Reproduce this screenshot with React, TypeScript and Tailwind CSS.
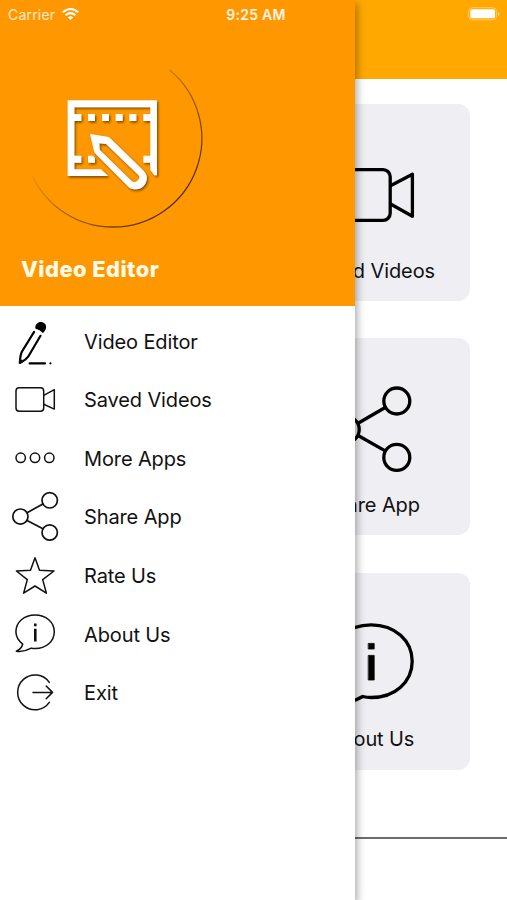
// react
import { FC, ReactNode } from "react";

interface IconProps {
  children: ReactNode;
}

// thin 50x50 icons of the side menu
const MenuIcon: FC<IconProps> = ({ children }) => (
  <svg
    className="h-[50px] w-[50px] shrink-0 overflow-visible"
    viewBox="0 0 50 50"
    fill="none"
    stroke="#111"
    strokeWidth="1.5"
    strokeLinecap="round"
    strokeLinejoin="round"
  >
    {children}
  </svg>
);

// bolder 100x100 icons of the home cards
const CardIcon: FC<IconProps> = ({ children }) => (
  <svg
    className="h-[100px] w-[100px] shrink-0"
    viewBox="0 0 100 100"
    fill="none"
    stroke="#000"
    strokeWidth="3.3"
    strokeLinecap="round"
    strokeLinejoin="round"
  >
    {children}
  </svg>
);

const menuItems = [
  {
    label: "Video Editor",
    icon: (
      <>
        <path
          d="M25.3 12.6C25 7.4 29.2 5 33 6.4C37.2 8.2 37.2 13 33 17Q29.8 13.8 25.3 12.6Z"
          fill="#000"
          stroke="none"
        />
        <path d="M24.1 15.9L12 35.5Q10.3 38.5 9.8 46.9Q16.5 43.5 18.6 40L30.5 19.8" stroke="#000" strokeWidth="2.2" />
        <path d="M9.9 47V43.5L13 45.3Z" fill="#000" />
        <path d="M19.6 47.4H35" stroke="#000" strokeWidth="2.1" />
        <circle cx="40.4" cy="47.3" r="1.1" fill="#000" stroke="none" />
      </>
    ),
  },
  {
    label: "Saved Videos",
    icon: (
      <>
        <rect x="6" y="12.7" width="27.7" height="23.6" rx="3.2" />
        <path d="M33.7 20.4L44.3 14.7V34.1L33.7 29.2" />
      </>
    ),
  },
  {
    label: "More Apps",
    icon: (
      <>
        <circle cx="10.7" cy="24.8" r="4.7" />
        <circle cx="25" cy="24.8" r="4.7" />
        <circle cx="39.3" cy="24.8" r="4.7" />
      </>
    ),
  },
  {
    label: "Share App",
    icon: (
      <g strokeWidth="1.7">
        <circle cx="10.4" cy="24.6" r="7.6" />
        <circle cx="39.7" cy="8.3" r="7.7" />
        <circle cx="39.7" cy="40.5" r="7.7" />
        <path d="M17.1 20.7L32.9 12M17.1 28.5L32.9 36.8" />
      </g>
    ),
  },
  {
    label: "Rate Us",
    icon: (
      <path d="M25 6.8L29.5 19.2L44 20L32.7 28.6L36.4 42.2L25 35L13.6 42.2L17.3 28.6L6.4 20L20.5 19.2Z" />
    ),
  },
  {
    label: "About Us",
    icon: (
      <>
        <path d="M12.7 35.2C8.8 32 5.9 27.8 5.9 22.8C5.9 13.2 14.2 6 25.1 6S44.3 13.2 44.3 22.8S36 39.6 25.1 39.6Q23 39.6 21.2 39.1C17 41.5 12 43 6.3 42.2C9 41 11.8 38.6 12.7 35.2Z" />
        <path d="M25.3 15.8V16M25.3 21V31.2" strokeWidth="2.6" strokeLinecap="square" />
      </>
    ),
  },
  {
    label: "Exit",
    icon: (
      <>
        <path d="M39.3 14.4A17.4 17.4 0 1 0 39.3 34.4" />
        <path d="M23 24.4H42.3M36.2 18L42.5 24.4L36.2 30.8" />
      </>
    ),
  },
];

const cards = [
  {
    label: "Saved Videos",
    icon: (
      <>
        <rect x="10" y="23.7" width="59.2" height="50.6" rx="7" />
        <path d="M70 39.5L91.4 28.3V70.3L70 58.3" />
      </>
    ),
  },
  {
    label: "Share App",
    icon: (
      <>
        <circle cx="25" cy="49.4" r="13.2" />
        <circle cx="75.8" cy="21" r="13" />
        <circle cx="75.8" cy="77.4" r="13" />
        <path d="M37.5 43L64.2 27.5M37.5 55.7L64.2 70.9" />
      </>
    ),
  },
  {
    label: "About Us",
    icon: (
      <>
        <path d="M23.4 73.2C15 66.5 8.7 57.2 8.7 46.3C8.7 25.6 26.5 9.8 50.2 9.8S91.2 25.6 91.2 46.3S73.9 82.5 50.2 82.5Q45.7 82.5 41.7 81.5C32.7 86.7 21.7 90 9.5 88.4C15.3 85.8 21.4 80.6 23.4 73.2Z" />
        <path d="M47.6 28.4h5.6v5.6h-5.6zM47.6 40.4h5.6v24.6h-5.6z" fill="#000" strokeWidth="0.8" />
      </>
    ),
  },
];

const Logo: FC = () => (
  <svg className="h-[180px] w-[200px]" viewBox="0 0 600 540" fill="none">
    <defs>
      <linearGradient id="arc" gradientUnits="userSpaceOnUse" x1="200" y1="155" x2="467" y2="423">
        <stop offset="0" stopColor="#4a2c00" stopOpacity="0" />
        <stop offset="0.4" stopColor="#4a2c00" stopOpacity="0.45" />
        <stop offset="1" stopColor="#3a2200" stopOpacity="0.9" />
      </linearGradient>
      <filter id="drop" x="-10%" y="-10%" width="125%" height="125%">
        <feDropShadow dx="4" dy="5" stdDeviation="3" floodColor="#5a3200" floodOpacity="0.75" />
      </filter>
    </defs>
    <path d="M449 30A266 266 0 0 1 279 501A266 266 0 0 1 36 345" stroke="url(#arc)" strokeWidth="3.8" />
    <g fill="#fff" filter="url(#drop)">
      <path d="M143 121H411V346L403 346L391 330V308H370V287H391V183H370V162H391V142H163V162H184V183H163V287H184V308H163V328H243L265 348H143Z" />
      <path d="M204 162h21v21h-21zM246 162h21v21h-21zM287 162h21v21h-21zM328 162h21v21h-21zM204 287h15l6 7v14h-21z" />
      <path
        fillRule="evenodd"
        d="M210 222L262 230Q267 231 271 235L371 332Q388 350 376 371Q362 394 334 386Q329 384 325 380L228 283Q223 278 222 273ZM238 250L239 269L335 363Q343 370 352 363Q363 353 355 345L258 252Z"
      />
    </g>
  </svg>
);

const StatusBar: FC = () => (
  <div className="absolute inset-x-0 top-0 z-20 grid h-7 grid-cols-3 items-center pr-[7px] pl-2 text-[14px] text-white">
    <div className="flex items-center gap-[7px]">
      <span className="tracking-[0.2px] text-white/80">Carrier</span>
      <svg className="h-3 w-[17px]" viewBox="0 0 17 12" fill="none" stroke="#fff" strokeWidth="2.1">
        <path d="M.8 4.2Q8.5 -2.3 16.2 4.2M3.6 7.2Q8.5 3.2 13.4 7.2" />
        <path d="M5.8 9.4Q8.5 7.2 11.2 9.4L8.5 12Z" fill="#fff" stroke="none" />
      </svg>
    </div>
    <span className="pl-1 text-center font-semibold tracking-[0.25px] whitespace-nowrap text-white/90">9:25 AM</span>
    <svg className="h-[14px] w-8 justify-self-end" viewBox="0 0 32 14">
      <rect x="0.7" y="0.7" width="28" height="12.2" rx="4" fill="none" stroke="#fff" strokeOpacity="0.4" />
      <rect x="2.3" y="2.3" width="24.8" height="9" rx="2" fill="#fff" />
      <path d="M30 5v4q1.6-.6 1.6-2t-1.6-2" fill="#fff" fillOpacity="0.5" />
    </svg>
  </div>
);

const Home: FC = () => (
  <main className="flex h-full flex-col">
    <header className="h-[79px] shrink-0 bg-[#ffa800]" />
    <div className="flex h-[758px] shrink-0 flex-col items-end gap-[37.4px] pt-[25px] pr-[37px]">
      {cards.map(card => (
        <div
          key={card.label}
          className="flex h-[197px] w-[198px] shrink-0 flex-col items-center gap-[12.6px] rounded-xl bg-[#efeef3] pt-[42px]"
        >
          <CardIcon>{card.icon}</CardIcon>
          <span className="text-[20px] leading-6 tracking-[-0.1px]">{card.label}</span>
        </div>
      ))}
    </div>
    <div className="h-[2px] shrink-0 bg-[#6b6e6d]" />
  </main>
);

const Drawer: FC = () => (
  <aside className="absolute inset-y-0 left-0 z-10 flex w-[355px] flex-col bg-white shadow-[2px_4px_8px_rgba(0,0,0,0.35)]">
    <div className="flex h-[306px] shrink-0 flex-col bg-[#ff9800] pt-[60px] pl-5">
      <Logo />
      <h1 className="mt-[15px] pl-px text-[22px] leading-7 font-extrabold tracking-[0.4px] text-[#fffbe8]">Video Editor</h1>
    </div>
    <nav className="pt-[6px] pl-[10px]">
      {menuItems.map(item => (
        <div key={item.label} className="flex h-[58.6px] items-center gap-6">
          <MenuIcon>{item.icon}</MenuIcon>
          <span className="pt-[0.5px] text-[20px] leading-6 tracking-[-0.12px]">{item.label}</span>
        </div>
      ))}
    </nav>
  </aside>
);

const App: FC = () => {
  return (
    <div className="relative h-[900px] w-[507px] overflow-hidden bg-white font-['Inter','Liberation_Sans',sans-serif] text-[#111]">
      <Home />
      <Drawer />
      <StatusBar />
    </div>
  );
};

export default App;
